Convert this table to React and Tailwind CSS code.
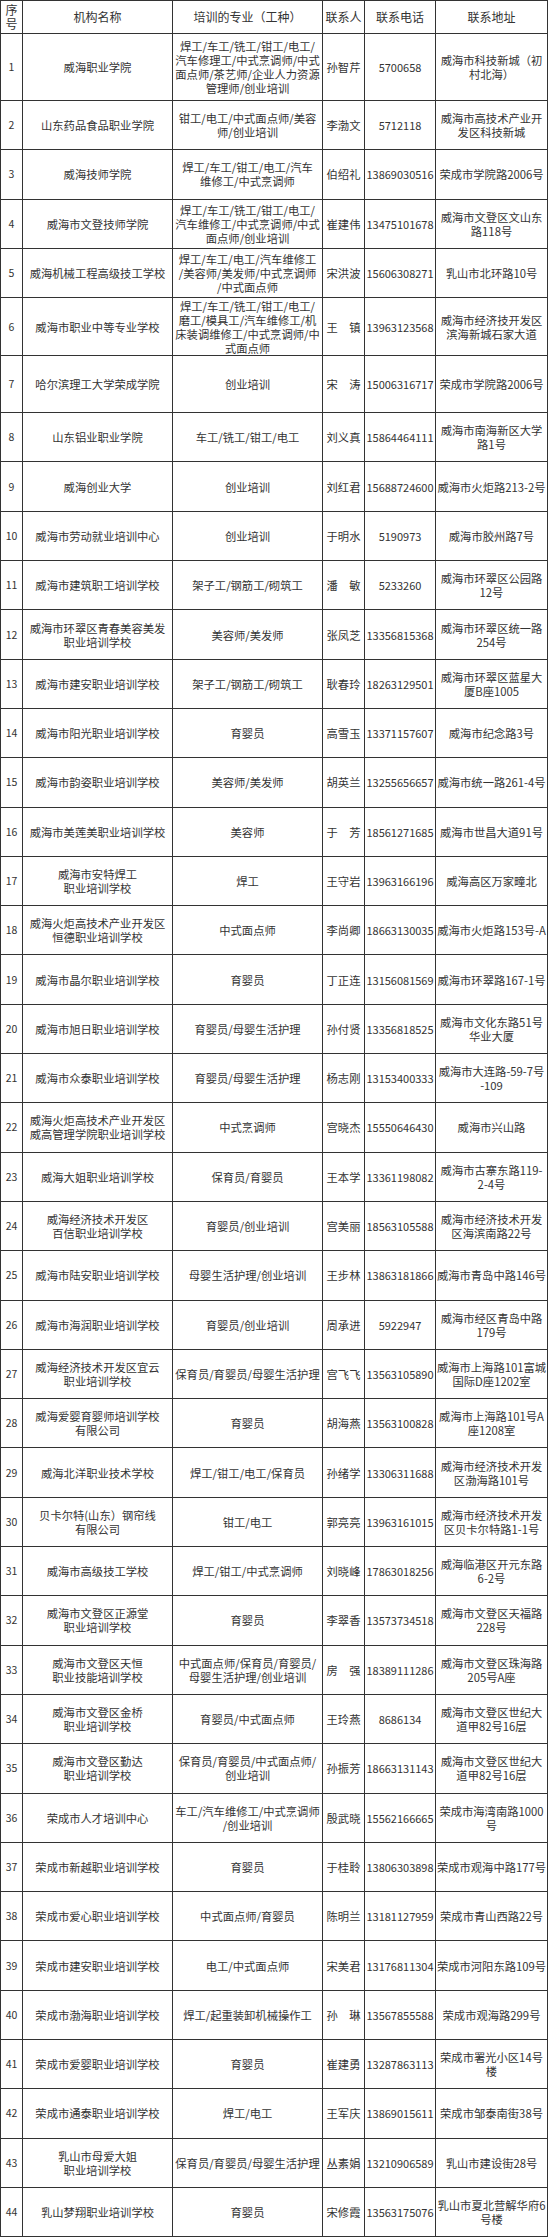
import React from "react";

const rows = [
  { n: "1", name: "威海职业学院", major: "焊工/车工/铣工/钳工/电工/\n汽车修理工/中式烹调师/中式\n面点师/茶艺师/企业人力资源\n管理师/创业培训", person: "孙智芹", phone: "5700658", addr: "威海市科技新城（初\n村北海）", h: "h-[67px]" },
  { n: "2", name: "山东药品食品职业学院", major: "钳工/电工/中式面点师/美容\n师/创业培训", person: "李渤文", phone: "5712118", addr: "威海市高技术产业开\n发区科技新城" },
  { n: "3", name: "威海技师学院", major: "焊工/车工/钳工/电工/汽车\n维修工/中式烹调师", person: "伯绍礼", phone: "13869030516", addr: "荣成市学院路2006号" },
  { n: "4", name: "威海市文登技师学院", major: "焊工/车工/铣工/钳工/电工/\n汽车维修工/中式烹调师/中式\n面点师/创业培训", person: "崔建伟", phone: "13475101678", addr: "威海市文登区文山东\n路118号" },
  { n: "5", name: "威海机械工程高级技工学校", major: "焊工/车工/电工/汽车维修工\n/美容师/美发师/中式烹调师\n/中式面点师", person: "宋洪波", phone: "15606308271", addr: "乳山市北环路10号" },
  { n: "6", name: "威海市职业中等专业学校", major: "焊工/车工/铣工/钳工/电工/\n磨工/模具工/汽车维修工/机\n床装调维修工/中式烹调师/中\n式面点师", person: "王　镇", phone: "13963123568", addr: "威海市经济技开发区\n滨海新城石家大道", h: "h-[58px]" },
  { n: "7", name: "哈尔滨理工大学荣成学院", major: "创业培训", person: "宋　涛", phone: "15006316717", addr: "荣成市学院路2006号", h: "h-[57px]" },
  { n: "8", name: "山东铝业职业学院", major: "车工/铣工/钳工/电工", person: "刘义真", phone: "15864464111", addr: "威海市南海新区大学\n路1号" },
  { n: "9", name: "威海创业大学", major: "创业培训", person: "刘红君", phone: "15688724600", addr: "威海市火炬路213-2号" },
  { n: "10", name: "威海市劳动就业培训中心", major: "创业培训", person: "于明水", phone: "5190973", addr: "威海市胶州路7号" },
  { n: "11", name: "威海市建筑职工培训学校", major: "架子工/钢筋工/砌筑工", person: "潘　敏", phone: "5233260", addr: "威海市环翠区公园路\n12号" },
  { n: "12", name: "威海市环翠区青春美容美发\n职业培训学校", major: "美容师/美发师", person: "张凤芝", phone: "13356815368", addr: "威海市环翠区统一路\n254号" },
  { n: "13", name: "威海市建安职业培训学校", major: "架子工/钢筋工/砌筑工", person: "耿春玲", phone: "18263129501", addr: "威海市环翠区蓝星大\n厦B座1005" },
  { n: "14", name: "威海市阳光职业培训学校", major: "育婴员", person: "高雪玉", phone: "13371157607", addr: "威海市纪念路3号" },
  { n: "15", name: "威海市韵姿职业培训学校", major: "美容师/美发师", person: "胡英兰", phone: "13255656657", addr: "威海市统一路261-4号" },
  { n: "16", name: "威海市美莲美职业培训学校", major: "美容师", person: "于　芳", phone: "18561271685", addr: "威海市世昌大道91号" },
  { n: "17", name: "威海市安特焊工\n职业培训学校", major: "焊工", person: "王守岩", phone: "13963166196", addr: "威海高区万家疃北" },
  { n: "18", name: "威海火炬高技术产业开发区\n恒德职业培训学校", major: "中式面点师", person: "李尚卿", phone: "18663130035", addr: "威海市火炬路153号-A" },
  { n: "19", name: "威海市晶尔职业培训学校", major: "育婴员", person: "丁正连", phone: "13156081569", addr: "威海市环翠路167-1号" },
  { n: "20", name: "威海市旭日职业培训学校", major: "育婴员/母婴生活护理", person: "孙付贤", phone: "13356818525", addr: "威海市文化东路51号\n华业大厦" },
  { n: "21", name: "威海市众泰职业培训学校", major: "育婴员/母婴生活护理", person: "杨志刚", phone: "13153400333", addr: "威海市大连路-59-7号\n-109" },
  { n: "22", name: "威海火炬高技术产业开发区\n威高管理学院职业培训学校", major: "中式烹调师", person: "宫晓杰", phone: "15550646430", addr: "威海市兴山路" },
  { n: "23", name: "威海大姐职业培训学校", major: "保育员/育婴员", person: "王本学", phone: "13361198082", addr: "威海市古寨东路119-\n2-4号" },
  { n: "24", name: "威海经济技术开发区\n百信职业培训学校", major: "育婴员/创业培训", person: "宫美丽", phone: "18563105588", addr: "威海市经济技术开发\n区海滨南路22号" },
  { n: "25", name: "威海市陆安职业培训学校", major: "母婴生活护理/创业培训", person: "王步林", phone: "13863181866", addr: "威海市青岛中路146号" },
  { n: "26", name: "威海市海润职业培训学校", major: "育婴员/创业培训", person: "周承进", phone: "5922947", addr: "威海市经区青岛中路\n179号" },
  { n: "27", name: "威海经济技术开发区宜云\n职业培训学校", major: "保育员/育婴员/母婴生活护理", person: "宫飞飞", phone: "13563105890", addr: "威海市上海路101富城\n国际D座1202室" },
  { n: "28", name: "威海爱婴育婴师培训学校\n有限公司", major: "育婴员", person: "胡海燕", phone: "13563100828", addr: "威海市上海路101号A\n座1208室" },
  { n: "29", name: "威海北洋职业技术学校", major: "焊工/钳工/电工/保育员", person: "孙绪学", phone: "13306311688", addr: "威海市经济技术开发\n区渤海路101号" },
  { n: "30", name: "贝卡尔特(山东）钢帘线\n有限公司", major: "钳工/电工", person: "郭亮亮", phone: "13963161015", addr: "威海市经济技术开发\n区贝卡尔特路1-1号" },
  { n: "31", name: "威海市高级技工学校", major: "焊工/钳工/中式烹调师", person: "刘晓峰", phone: "17863018256", addr: "威海临港区开元东路\n6-2号" },
  { n: "32", name: "威海市文登区正源堂\n职业培训学校", major: "育婴员", person: "李翠香", phone: "13573734518", addr: "威海市文登区天福路\n228号" },
  { n: "33", name: "威海市文登区天恒\n职业技能培训学校", major: "中式面点师/保育员/育婴员/\n母婴生活护理/创业培训", person: "房　强", phone: "18389111286", addr: "威海市文登区珠海路\n205号A座" },
  { n: "34", name: "威海市文登区金桥\n职业培训学校", major: "育婴员/中式面点师", person: "王玲燕", phone: "8686134", addr: "威海市文登区世纪大\n道甲82号16层" },
  { n: "35", name: "威海市文登区勤达\n职业培训学校", major: "保育员/育婴员/中式面点师/\n创业培训", person: "孙振芳", phone: "18663131143", addr: "威海市文登区世纪大\n道甲82号16层" },
  { n: "36", name: "荣成市人才培训中心", major: "车工/汽车维修工/中式烹调师\n/创业培训", person: "殷武晓", phone: "15562166665", addr: "荣成市海湾南路1000\n号" },
  { n: "37", name: "荣成市新越职业培训学校", major: "育婴员", person: "于桂聆", phone: "13806303898", addr: "荣成市观海中路177号" },
  { n: "38", name: "荣成市爱心职业培训学校", major: "中式面点师/育婴员", person: "陈明兰", phone: "13181127959", addr: "荣成市青山西路22号" },
  { n: "39", name: "荣成市建安职业培训学校", major: "电工/中式面点师", person: "宋美君", phone: "13176811304", addr: "荣成市河阳东路109号" },
  { n: "40", name: "荣成市渤海职业培训学校", major: "焊工/起重装卸机械操作工", person: "孙　琳", phone: "13567855588", addr: "荣成市观海路299号" },
  { n: "41", name: "荣成市爱婴职业培训学校", major: "育婴员", person: "崔建勇", phone: "13287863113", addr: "荣成市署光小区14号\n楼" },
  { n: "42", name: "荣成市通泰职业培训学校", major: "焊工/电工", person: "王军庆", phone: "13869015611", addr: "荣成市邹泰南街38号" },
  { n: "43", name: "乳山市母爱大姐\n职业培训学校", major: "保育员/育婴员/母婴生活护理", person: "丛素娟", phone: "13210906589", addr: "乳山市建设街28号" },
  { n: "44", name: "乳山梦翔职业培训学校", major: "育婴员", person: "宋修霞", phone: "13563175076", addr: "乳山市夏北营解华府6\n号楼" },
];

const Lines = ({ text }) =>
  text.split("\n").map((line, i) => (
    <div key={i} className="whitespace-nowrap">
      {line}
    </div>
  ));

const cell =
  "shrink-0 border-r border-[#333] flex flex-col items-center justify-center text-center";

const Row = ({ h, children }) => (
  <div className={`flex border-b border-[#333] ${h}`}>{children}</div>
);

export default function App() {
  return (
    <div
      className="w-[550px] min-h-[2237px] bg-white text-[#333] text-[11.3px] leading-[14px]"
      style={{ fontFamily: '"Noto Sans CJK SC", "Noto Sans", sans-serif' }}
    >
      <div className="w-[548px] border-l border-t border-[#333]">
        {/* Header */}
        <Row h="h-[33px]">
          <div className={`${cell} w-[22px] text-[12px]`}>
            <Lines text={"序\n号"} />
          </div>
          <div className={`${cell} w-[150px] text-[12px]`}>机构名称</div>
          <div className={`${cell} w-[150px] text-[12px]`}>培训的专业（工种）</div>
          <div className={`${cell} w-[42px] text-[12px]`}>联系人</div>
          <div className={`${cell} w-[71px] text-[12px]`}>联系电话</div>
          <div className={`${cell} w-[112px] text-[12px]`}>联系地址</div>
        </Row>

        {rows.map((r) => (
          <Row key={r.n} h={r.h || "h-[49.3px]"}>
            <div className={`${cell} w-[22px] text-[10.5px]`}>{r.n}</div>
            <div className={`${cell} w-[150px]`}>
              <Lines text={r.name} />
            </div>
            <div className={`${cell} w-[150px]`}>
              <Lines text={r.major} />
            </div>
            <div className={`${cell} w-[42px]`}>{r.person}</div>
            <div className={`${cell} w-[71px] text-[11px]`}>{r.phone}</div>
            <div className={`${cell} w-[112px]`}>
              <Lines text={r.addr} />
            </div>
          </Row>
        ))}
      </div>
    </div>
  );
}
